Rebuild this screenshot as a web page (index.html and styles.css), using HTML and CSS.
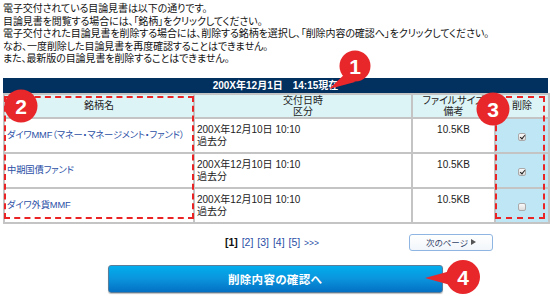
FILE: index.html
```html
<!DOCTYPE html>
<html lang="ja">
<head>
<meta charset="utf-8">
<link rel="stylesheet" href="styles.css">
</head>
<body>
<div class="page">
  <div class="intro">
    <p>電子交付されている目論見書は以下の通りです。</p>
    <p>目論見書を閲覧する場合には、「銘柄」をクリックしてください。</p>
    <p>電子交付された目論見書を削除する場合には、削除する銘柄を選択し、「削除内容の確認へ」をクリックしてください。</p>
    <p>なお、一度削除した目論見書を再度確認することはできません。</p>
    <p>また、最新版の目論見書を削除することはできません。</p>
  </div>

  <div class="list">
    <div class="title-bar">200X年12月1日　14:15現在</div>
    <table class="docs">
      <colgroup>
        <col class="c-name"><col class="c-date"><col class="c-size"><col class="c-del">
      </colgroup>
      <thead>
        <tr>
          <th>銘柄名</th>
          <th>交付日時<br>区分</th>
          <th>ファイルサイズ<br>備考</th>
          <th>削除</th>
        </tr>
      </thead>
      <tbody>
        <tr>
          <td class="name"><a href="#">ダイワMMF（マネー・マネージメント・ファンド）</a></td>
          <td class="date">200X年12月10日 10:10<br>過去分</td>
          <td class="size">10.5KB</td>
          <td class="del"><span class="check on"></span></td>
        </tr>
        <tr>
          <td class="name"><a href="#">中期国債ファンド</a></td>
          <td class="date">200X年12月10日 10:10<br>過去分</td>
          <td class="size">10.5KB</td>
          <td class="del"><span class="check on"></span></td>
        </tr>
        <tr>
          <td class="name"><a href="#">ダイワ外貨MMF</a></td>
          <td class="date">200X年12月10日 10:10<br>過去分</td>
          <td class="size">10.5KB</td>
          <td class="del"><span class="check"></span></td>
        </tr>
      </tbody>
    </table>
  </div>

  <div class="pager-row">
    <div class="pager"><b>[1]</b> <a href="#">[2]</a> <a href="#">[3]</a> <a href="#">[4]</a> <a href="#">[5]</a> <a href="#" class="more">&gt;&gt;&gt;</a></div>
    <a href="#" class="next">次のページ<span class="tri"></span></a>
  </div>

  <div class="confirm-row">
    <a href="#" class="confirm">削除内容の確認へ</a>
  </div>

  <div class="mark mark-name"></div>
  <div class="mark mark-del"></div>

  <svg class="badge b1" width="50" height="50" viewBox="0 0 50 50">
    <path d="M4 43 L22 26 L30 36 Z" class="tail"/>
    <circle cx="30" cy="20" r="15.5" class="disc"/>
    <text x="30" y="27.5" class="num">1</text>
  </svg>
  <svg class="badge b2" width="36" height="36" viewBox="0 0 36 36">
    <circle cx="18" cy="18" r="16.5" class="disc"/>
    <text x="18" y="25.5" class="num">2</text>
  </svg>
  <svg class="badge b3" width="36" height="36" viewBox="0 0 36 36">
    <circle cx="18" cy="18" r="16.5" class="disc"/>
    <text x="18" y="25.5" class="num">3</text>
  </svg>
  <svg class="badge b4" width="60" height="40" viewBox="0 0 60 40">
    <path d="M1 21 L30 13 L30 29 Z" class="tail"/>
    <circle cx="39" cy="20" r="17" class="disc"/>
    <text x="39" y="27.5" class="num">4</text>
  </svg>
</div>
</body>
</html>
```

FILE: styles.css
```css
* { box-sizing: border-box; }

html, body {
  margin: 0;
  padding: 0;
  background: #fff;
}

body {
  font-family: "Liberation Sans", "Noto Sans CJK JP", sans-serif;
  color: #111;
  font-feature-settings: "palt";
}

.page {
  position: relative;
  width: 550px;
  height: 299px;
  padding: 3px 2px 0 3px;
  overflow: hidden;
}

.intro p {
  margin: 0;
  font-size: 10px;
  line-height: 12.5px;
  white-space: nowrap;
  letter-spacing: -0.1px;
}

.list {
  margin-top: 12px;
  width: 545px;
}

.title-bar {
  height: 15px;
  background: #02305f;
  color: #fff;
  font-weight: bold;
  font-size: 10px;
  line-height: 16px;
  text-align: center;
}

.docs {
  width: 545px;
  border-collapse: collapse;
  table-layout: fixed;
  font-size: 10px;
  border: 2px solid #c4c4c4;
  border-top: 0;
}

.c-name { width: 190px; }
.c-date { width: 218px; }
.c-size { width: 83px; }
.c-del { width: 54px; }

.docs th,
.docs td {
  border: 2px solid #c4c4c4;
  padding: 0;
}

.docs th {
  height: 24px;
  background: #ddf4f6;
  font-weight: normal;
  color: #222;
  line-height: 11px;
  vertical-align: middle;
  text-align: center;
  font-size: 10px;
}

.docs td {
  height: 35px;
  line-height: 12.5px;
}

.docs td.name {
  padding: 1px 0 0 2px;
  vertical-align: middle;
}

.docs td.name a {
  color: #2c4fa6;
  text-decoration: none;
  white-space: nowrap;
  font-size: 9.3px;
  letter-spacing: -0.15px;
}

.docs td.date {
  padding: 5px 0 0 2px;
  vertical-align: top;
  color: #222;
}

.docs td.size {
  padding-top: 5px;
  vertical-align: top;
  text-align: center;
  color: #222;
}

.docs td.del {
  background: #bfe6f5;
  text-align: center;
  vertical-align: middle;
  padding-top: 3px;
}

.check {
  display: inline-block;
  width: 8px;
  height: 8px;
  border: 1px solid #aaa;
  border-radius: 2px;
  background: linear-gradient(#fafafa, #dcdcdc);
  position: relative;
  vertical-align: middle;
}

.check.on::after {
  content: "";
  position: absolute;
  left: 1.5px;
  top: 0px;
  width: 2px;
  height: 4px;
  border: solid #222;
  border-width: 0 1.5px 1.5px 0;
  transform: rotate(40deg);
}

.pager-row {
  display: grid;
  grid-template-columns: 406px 84px;
  align-items: center;
  margin-top: 10px;
  height: 17px;
}

.pager {
  justify-self: end;
  margin-right: 90px;
  font-size: 10.5px;
  color: #111;
  word-spacing: 1px;
}

.pager b { font-weight: bold; }

.pager a {
  color: #2c4fa6;
  text-decoration: none;
}

.pager a.more {
  font-size: 8.5px;
}

.next {
  display: flex;
  align-items: center;
  justify-content: center;
  gap: 3px;
  height: 17px;
  border: 1px solid #8fb6e2;
  border-radius: 3px;
  background: linear-gradient(#ffffff, #f2f6fa);
  color: #34456a;
  font-size: 8.5px;
  text-decoration: none;
}

.tri {
  width: 0;
  height: 0;
  border-left: 5px solid #555;
  border-top: 3.5px solid transparent;
  border-bottom: 3.5px solid transparent;
}

.confirm-row {
  display: flex;
  justify-content: center;
  margin-top: 14px;
  padding-right: 1px;
}

.confirm {
  display: flex;
  align-items: center;
  justify-content: center;
  width: 335px;
  height: 28px;
  border: 1px solid #5a7d9a;
  border-radius: 3px;
  background: linear-gradient(#02aeee, #0a94dc 50%, #0470c4);
  color: #fff;
  font-size: 11.5px;
  font-weight: bold;
  letter-spacing: 0.3px;
  text-decoration: none;
  box-shadow: 0 1px 1px rgba(0,0,0,0.25);
}

.mark {
  position: absolute;
  border: 2px dashed #ea2424;
}

.mark-name {
  left: 4px;
  top: 96px;
  width: 190px;
  height: 123px;
}

.mark-del {
  left: 495px;
  top: 96px;
  width: 50px;
  height: 123px;
}

.badge {
  position: absolute;
  overflow: visible;
}

.badge .disc,
.badge .tail {
  fill: #e8272b;
}

.badge .num {
  fill: #fff;
  font-family: "Liberation Sans", Arial, sans-serif;
  font-weight: bold;
  font-size: 21px;
  text-anchor: middle;
}

.b1 { left: 325px; top: 46px; }
.b2 { left: 3px; top: 88px; }
.b3 { left: 475px; top: 91px; }
.b4 { left: 424px; top: 257px; }
```
